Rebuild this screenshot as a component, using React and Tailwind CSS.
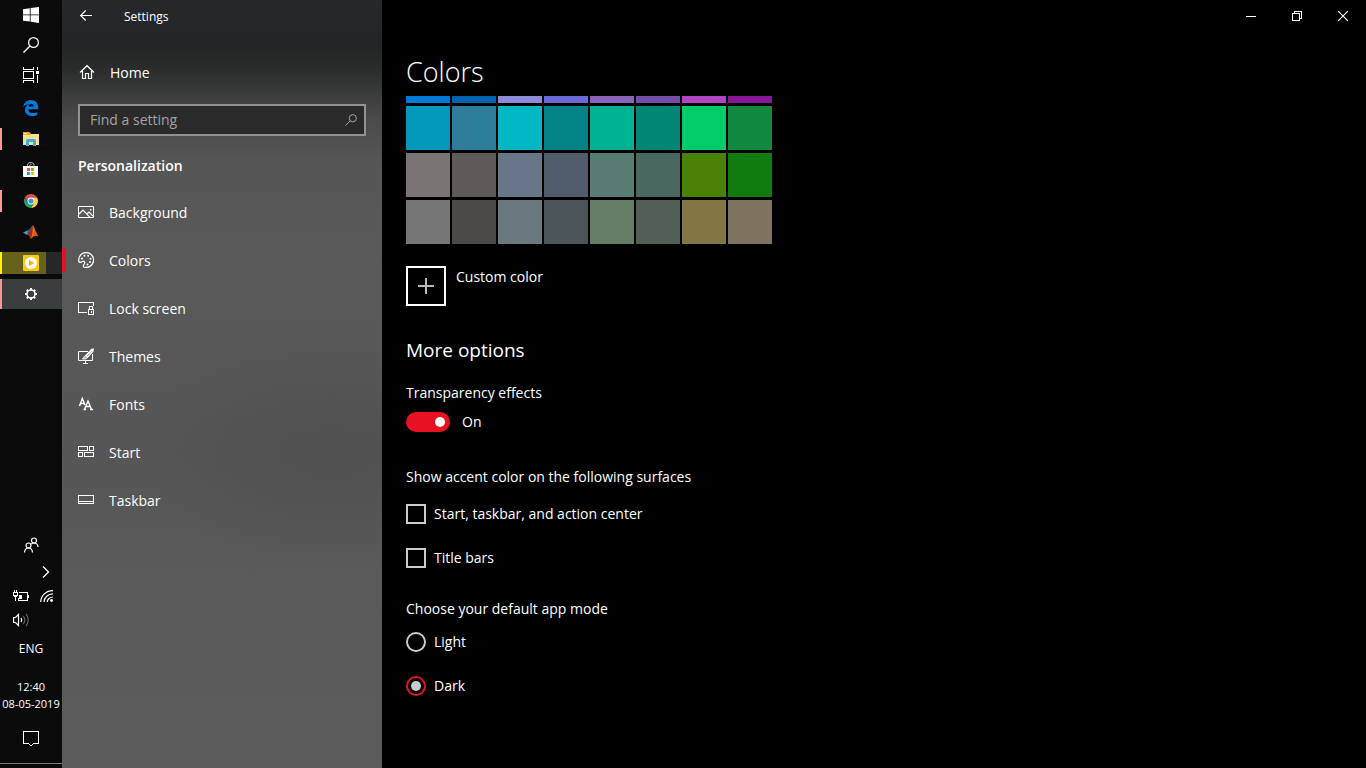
import React, { useState } from 'react';

const SWATCHES = [
  { name: 'Default blue', color: 'bg-[#0078d7]' },
  { name: 'Navy blue', color: 'bg-[#0063b1]' },
  { name: 'Purple shadow', color: 'bg-[#8e8cd8]' },
  { name: 'Purple shadow dark', color: 'bg-[#6b69d6]' },
  { name: 'Iris pastel', color: 'bg-[#8764b8]' },
  { name: 'Iris spring', color: 'bg-[#744da9]' },
  { name: 'Violet red light', color: 'bg-[#b146c2]' },
  { name: 'Violet red', color: 'bg-[#881798]' },
  { name: 'Cool blue bright', color: 'bg-[#0099bc]' },
  { name: 'Cool blue', color: 'bg-[#2d7d9a]' },
  { name: 'Seafoam', color: 'bg-[#00b7c3]' },
  { name: 'Seafoam teal', color: 'bg-[#038387]' },
  { name: 'Mint light', color: 'bg-[#00b294]' },
  { name: 'Mint dark', color: 'bg-[#018574]' },
  { name: 'Turf green', color: 'bg-[#00cc6a]' },
  { name: 'Sport green', color: 'bg-[#10893e]' },
  { name: 'Gray', color: 'bg-[#7a7574]' },
  { name: 'Gray brown', color: 'bg-[#5d5a58]' },
  { name: 'Steel blue', color: 'bg-[#68768a]' },
  { name: 'Metal blue', color: 'bg-[#515c6b]' },
  { name: 'Pale moss', color: 'bg-[#567c73]' },
  { name: 'Moss', color: 'bg-[#486860]' },
  { name: 'Meadow green', color: 'bg-[#498205]' },
  { name: 'Green', color: 'bg-[#107c10]' },
  { name: 'Overcast', color: 'bg-[#767676]' },
  { name: 'Storm', color: 'bg-[#4c4a48]' },
  { name: 'Blue gray', color: 'bg-[#69797e]' },
  { name: 'Gray dark', color: 'bg-[#4a5459]' },
  { name: 'Liddy green', color: 'bg-[#647c64]' },
  { name: 'Sage', color: 'bg-[#525e54]' },
  { name: 'Camouflage desert', color: 'bg-[#847545]' },
  { name: 'Camouflage', color: 'bg-[#7e735f]' },
];

function Icon({ children, w = 16, h = 16, crisp = false }) {
  return (
    <svg
      width={w}
      height={h}
      viewBox={`0 0 ${w} ${h}`}
      fill="none"
      stroke="currentColor"
      shapeRendering={crisp ? 'crispEdges' : 'auto'}
      className="shrink-0"
      aria-hidden="true"
    >
      {children}
    </svg>
  );
}

/* ---------- taskbar icons ---------- */

const WindowsIcon = () => (
  <Icon>
    <path stroke="none" fill="currentColor" d="M0 2.2 6.8 1.2V7.4H0zM7.6 1.1 16 0V7.4H7.6zM0 8.3H6.8V14.6L0 13.7zM7.6 8.3H16V16L7.6 14.8z" />
  </Icon>
);

const SearchIcon = () => (
  <Icon>
    <circle cx="10.5" cy="5.5" r="4.9" strokeWidth="1.2" />
    <path d="M7 9 .5 15.5" strokeWidth="1.4" />
  </Icon>
);

const TaskViewIcon = () => (
  <Icon crisp>
    <path d="M.5 0V2.5H10.5V0M.5 16V13.5H10.5V16M.5 4.5H10.5V11.5H.5zM14.5 0V3M14.5 8V16" />
    <path stroke="none" fill="currentColor" d="M13 4h3v3h-3z" />
  </Icon>
);

const EdgeIcon = () => (
  <Icon>
    <path
      stroke="none"
      fill="#0078d7"
      d="M.2 7C.9 2.6 4 0 8 0c4.600 0 7.200 3.200 7.200 7.400v1.800H5.300c.1 2.600 2.100 3.900 4.700 3.900 1.700 0 3.100-.5 4.300-1.200v3.200C12.900 15.800 11.300 16.200 9.300 16.200 4.800 16.200 2 13.600 2 9.900 2 7.300 3.500 5.300 5.800 4.300 3.400 4.400 1.500 5.400.2 7zM5.500 6.500h5.200C10.700 4.700 9.900 3.700 8.300 3.700 6.700 3.700 5.700 4.900 5.500 6.500z"
    />
  </Icon>
);

const FolderIcon = () => (
  <Icon>
    <g stroke="none">
      <path fill="#e8b022" d="M0 1h6.500L8 3h8v3H0z" />
      <path fill="#ffe9a6" d="M1 2h3v1H1z" />
      <path fill="#fde08a" d="M0 4h7l1-1h8v11H0z" />
      <path fill="#35b0ea" d="M3 15V9.500Q3 8 4.500 8h7Q13 8 13 9.500V15h-3v-4H6v4z" />
    </g>
  </Icon>
);

const StoreIcon = () => (
  <Icon>
    <path d="M4.500 5V3.500C4.500 1.500 5.500.7 7 .7h1.500C10 .7 11 1.500 11 3.500V5M6.500 4.500C6.500 3 7.500 2.500 8.500 2.500" stroke="#ccc" />
    <g stroke="none">
      <path fill="#fff" d="M0 4h15v10q0 1-1 1H1q-1 0-1-1z" />
      <path fill="#f25022" d="M4 6h3v3H4z" />
      <path fill="#7fba00" d="M8 6h3v3H8z" />
      <path fill="#00a4ef" d="M4 10h3v3H4z" />
      <path fill="#ffb900" d="M8 10h3v3H8z" />
    </g>
  </Icon>
);

const ChromeIcon = () => (
  <Icon>
    <g stroke="none">
      <path fill="#dd4f43" d="M8 4.600H14.100A7 7 0 0 0 1.940 4.500L5 9.700z" />
      <path fill="#ffcd46" d="M8 4.600H14.120A7 7 0 0 1 8 15L11 9.700z" />
      <path fill="#1ea362" d="M1.940 4.500A7 7 0 0 0 8 15L11 9.700H5z" />
      <circle cx="8" cy="8" r="3.400" fill="#fff" />
      <circle cx="8" cy="8" r="2.600" fill="#4a8af4" />
    </g>
  </Icon>
);

const MatlabIcon = () => (
  <Icon>
    <g stroke="none">
      <path fill="#4b9bd4" d="M0 8.500 5 6.200 6.500 8 4 11z" />
      <path fill="#2c5f94" d="M5 6.200C7 5.500 8 2.500 9.500 1.500L7.500 9 4 11z" />
      <path fill="#9c2a14" d="M9.800 1C8.500 3.500 8 7 4 11c1.600-.4 2.500 1.500 3.600 4C9.600 13 10.500 10 10.500 7z" />
      <path fill="#e0601c" d="M9.800 1C11.500 2 12.500 8.500 15.800 12.600 13.500 10.800 11 11.500 7.600 15 10 9.500 9.500 5 9.800 1z" />
      <path fill="#f7b24a" d="M10.200 3.500C10.700 6 10.500 9 9.500 12 11 8.500 11 6 10.200 3.500z" />
    </g>
  </Icon>
);

const PlayerIcon = () => (
  <Icon>
    <g stroke="none">
      <rect width="16" height="16" rx="1" fill="#f7cb15" />
      <circle cx="8" cy="8" r="6" fill="#fff" />
      <path fill="#f2b90c" d="M6 4.800 11.300 8 6 11.200z" />
    </g>
  </Icon>
);

const GearIcon = () => (
  <Icon>
    <circle cx="8" cy="8" r="4" strokeWidth="1.600" />
    <path d="M8 4V2M8 12v2M4 8H2M12 8h2M5.200 5.200 3.800 3.800M10.800 10.800l1.400 1.400M10.800 5.200l1.400-1.400M5.200 10.800l-1.400 1.400" strokeWidth="2" />
  </Icon>
);

const PeopleIcon = () => (
  <Icon>
    <circle cx="5.500" cy="8.500" r="2.500" strokeWidth="1.200" />
    <path d="M1.500 15.500C1.700 12.800 3.200 11 5.500 11s3.800 1.800 4 4.500" strokeWidth="1.200" />
    <circle cx="11" cy="3.500" r="2.500" strokeWidth="1.200" />
    <path d="M8.300 7.200C9 6.500 9.900 6 11 6c2.300 0 3.800 1.800 4 4" strokeWidth="1.200" />
  </Icon>
);

const ChevronIcon = () => (
  <Icon w={8} h={12}>
    <path d="M1 .5 6.500 6 1 11.500" strokeWidth="1.300" />
  </Icon>
);

const BatteryIcon = () => (
  <Icon h={12} crisp>
    <path d="M6 2.500h8.500v8h-9V8M15.500 5v3M1.500 0v2M3.500 0v2M.5 2.500h4v3h-4zM2.500 6v5" />
    <path stroke="none" fill="currentColor" d="M1 5h3v2H1zM6 5h3v4H6z" />
  </Icon>
);

const WifiIcon = () => (
  <Icon w={14} h={12}>
    <path d="M.7 12C1 5.500 6 .7 13 .7M4 12C4.200 7.500 7.800 3.900 13 3.900M7.200 12C7.300 9.300 9.800 7 13 7" strokeWidth="1.200" />
    <circle cx="11.500" cy="10.500" r="1.400" stroke="none" fill="currentColor" />
  </Icon>
);

const VolumeIcon = () => (
  <Icon h={14}>
    <path d="M.6 4.500H2.500L5.500 1.500v11L2.500 9.500H.6zM8 4.800q1.500 2.200 0 4.400" strokeWidth="1.200" />
    <path d="M10.500 2.800q3 4.200 0 8.400M13 .8q4.500 6.200 0 12.400" stroke="#777" />
  </Icon>
);

const ActionCenterIcon = () => (
  <Icon h={17} crisp>
    <path d="M.5.5h15v12h-5L8 15 5.500 12.500h-5z" />
  </Icon>
);

/* ---------- settings icons ---------- */

const BackIcon = () => (
  <Icon w={12} h={12}>
    <path d="M0 5.500h12M5.700.5.700 5.500l5 5" strokeWidth="1.200" />
  </Icon>
);

const HomeIcon = () => (
  <Icon>
    <path d="M1 8.500 8 1.700 15 8.500M3.500 7V14.500H6.500V9.500h3v5h3V7" strokeWidth="1.200" />
  </Icon>
);

const FindIcon = () => (
  <Icon w={12} h={12}>
    <circle cx="7.800" cy="4.200" r="3.600" />
    <path d="M5.200 6.800.500 11.500" />
  </Icon>
);

const PictureIcon = () => (
  <Icon>
    <path d="M.5 2.500h15v11H.5z" />
    <path d="M1 10 5 6l7 7.300M9 9.800 11 8l4 4.200" strokeWidth="1.200" />
    <path stroke="none" fill="currentColor" d="M12 5h1.500v1.500H12z" />
  </Icon>
);

const PaletteIcon = () => (
  <Icon>
    <path
      d="M8 .600a7.400 7.400 0 1 1-2.200 14.400C4.700 14.400 5.800 12.500 6.500 11.500c.7-1.300-.6-2.700-1.900-2.100C3 10.200 1.500 11 .8 9.500.200 4.500 3.500.600 8 .600z"
      strokeWidth="1.300"
    />
    <g stroke="none" fill="currentColor">
      <circle cx="4" cy="6.500" r="1" />
      <circle cx="6.500" cy="3.700" r="1" />
      <circle cx="10.200" cy="3.700" r="1" />
      <circle cx="12.500" cy="6.700" r="1" />
      <circle cx="12" cy="10" r="1" />
      <circle cx="9.500" cy="12.500" r="1" />
    </g>
  </Icon>
);

const LockScreenIcon = () => (
  <Icon crisp>
    <path d="M9 12.500H.5v-10h15V6M10.500 9.500h5v5h-5zM11.500 9V6.500h3V9" />
    <path d="M13 11v2" />
  </Icon>
);

const ThemesIcon = () => (
  <Icon>
    <path d="M10 3.500H.5v9h14V6M7.500 12.500V15M5 15.500h5" />
    <path d="M15.300 1 8.500 7.500M15.300 1 15 3.200 9.800 9 8 7.500 13.500 1.500z" strokeWidth="1.200" />
    <path d="M8 7.700c-1.500 0-2 1-2.200 2.300l-1.300.8c2 .6 4.800.2 5-1.800" fill="currentColor" fillOpacity=".5" />
  </Icon>
);

const FontsIcon = () => (
  <Icon>
    <path d="M1.500 10 4.300 2.500 7 9M2.500 7.500h4M6.500 13.500 10 5l3.500 8.500M7.800 10.500h4.500M5.500 13.500H8M12 13.500h3" strokeWidth="1.400" />
  </Icon>
);

const StartIcon = () => (
  <Icon crisp>
    <path d="M.5 2.500h9v4h-9zM11.500 2.500h4v4h-4zM.5 8.500h4v4h-4zM6.500 8.500h9v4h-9z" />
  </Icon>
);

const TaskbarIcon = () => (
  <Icon crisp>
    <path d="M.5 3.500h15v8H.5zM0 9.500h16" />
  </Icon>
);

/* ---------- layout ---------- */

const APPS = [
  { name: 'Edge', icon: EdgeIcon },
  { name: 'File Explorer', icon: FolderIcon, open: true },
  { name: 'Store', icon: StoreIcon },
  { name: 'Chrome', icon: ChromeIcon, open: true },
  { name: 'MATLAB', icon: MatlabIcon },
];

const NAV = [
  { label: 'Background', icon: PictureIcon },
  { label: 'Colors', icon: PaletteIcon },
  { label: 'Lock screen', icon: LockScreenIcon },
  { label: 'Themes', icon: ThemesIcon },
  { label: 'Fonts', icon: FontsIcon },
  { label: 'Start', icon: StartIcon },
  { label: 'Taskbar', icon: TaskbarIcon },
];

function Taskbar() {
  return (
    <aside className="flex w-[62px] shrink-0 flex-col bg-[#0a0a0a] text-xs text-white">
      <div className="mb-[3px] flex flex-col">
        <button aria-label="Start menu" className="flex h-[30px] items-center justify-center"><WindowsIcon /></button>
        <button aria-label="Search" className="flex h-[30px] items-center justify-center"><SearchIcon /></button>
        <button aria-label="Task view" className="flex h-[30px] items-center justify-center"><TaskViewIcon /></button>
      </div>

      <div className="flex flex-col gap-px">
        {APPS.map(({ name, icon: AppIcon, open }) => (
          <button key={name} aria-label={name} className="flex h-[30px] items-center">
            <span className={open ? 'h-[22px] w-0.5 bg-[#ff9499]' : 'w-0.5'} />
            <span className="flex flex-1 justify-center pr-0.5"><AppIcon /></span>
          </button>
        ))}
        <button aria-label="Media player" className="flex h-[30px] items-center">
          <span className="flex h-[22px] w-full items-center bg-[linear-gradient(90deg,#fff200_2px,#66611a_2px,#66611a_46px,#262828_46px)]">
            <span className="flex flex-1 justify-center"><PlayerIcon /></span>
          </span>
        </button>
        <button aria-label="Settings" className="flex h-[30px] items-center justify-center border-l-2 border-[#ff9499] bg-[#3b3e3e] pr-0.5">
          <GearIcon />
        </button>
      </div>

      <div className="mt-auto flex flex-col">
        <button aria-label="People" className="flex h-[30px] items-center justify-center"><PeopleIcon /></button>
        <button aria-label="Show hidden icons" className="flex h-6 items-center justify-end pr-3"><ChevronIcon /></button>
        <div className="grid grid-cols-2 px-2">
          <button aria-label="Battery" className="flex h-6 items-center pl-[5px]"><BatteryIcon /></button>
          <button aria-label="Network" className="flex h-6 items-center justify-end"><WifiIcon /></button>
          <button aria-label="Volume" className="flex h-6 items-center pl-[5px]"><VolumeIcon /></button>
        </div>
        <button className="h-[34px] text-center">ENG</button>
        <button className="mt-3 text-center text-[11px] leading-[17px] whitespace-nowrap">
          12:40
          <br />
          08-05-2019
        </button>
        <button aria-label="Action center" className="flex h-[51px] items-center justify-center pt-1"><ActionCenterIcon /></button>
        <div className="h-[5px] border-t border-[#77797a]" />
      </div>
    </aside>
  );
}

function Sidebar({ active, onSelect }) {
  return (
    <nav className="flex w-80 shrink-0 flex-col bg-[radial-gradient(ellipse_190px_110px_at_84%_455px,#4b4b4b99,#4b4b4b00),linear-gradient(180deg,#272829_0px,#232425_45px,#2b2c2c_70px,#3c3d3d_96px,#4b4b4b_120px,#565656_165px,#595959_260px,#565656_450px,#5b5b5b_640px,#5c5c5c_768px)]">
      <div className="flex h-8 items-center gap-8 pl-[18px]">
        <button aria-label="Back"><BackIcon /></button>
        <span className="pt-0.5 text-xs">Settings</span>
      </div>

      <a href="#home" className="mt-6 flex h-8 items-center gap-[15px] pl-[17px]">
        <HomeIcon />
        <span className="pt-0.5">Home</span>
      </a>

      <label className="mx-4 mt-4 flex h-8 items-center border-2 border-[#929292] bg-[#2a2a2a] px-2.5 text-[#a3a3a3]">
        <input
          type="text"
          aria-label="Find a setting"
          placeholder="Find a setting"
          className="min-w-0 flex-1 bg-transparent outline-none placeholder:text-[#a3a3a3]"
        />
        <span className="-mr-[3px]"><FindIcon /></span>
      </label>

      <h2 className="mt-5 mb-3 pl-4 leading-5 font-semibold">Personalization</h2>

      <ul>
        {NAV.map(({ label, icon: NavIcon }) => (
          <li key={label}>
            <a
              href={`#${label.toLowerCase().replace(' ', '-')}`}
              onClick={() => onSelect(label)}
              className="flex h-12 items-center"
            >
              <span className={active === label ? 'h-6 w-1 bg-[#e81123]' : 'w-1'} />
              <span className="ml-3 flex items-center gap-[15px]">
                <NavIcon />
                <span className="pt-0.5">{label}</span>
              </span>
            </a>
          </li>
        ))}
      </ul>
    </nav>
  );
}

function WindowControls() {
  return (
    <div className="flex justify-end">
      <button aria-label="Minimize" className="flex h-8 w-[46px] items-center justify-center">
        <Icon w={10} h={10} crisp><path d="M0 5.500h10" /></Icon>
      </button>
      <button aria-label="Restore" className="flex h-8 w-[46px] items-center justify-center">
        <Icon w={10} h={10} crisp><path d="M.5 2.500h7v7h-7zM2.500 2V.5h7v7H8" /></Icon>
      </button>
      <button aria-label="Close" className="flex h-8 w-[46px] items-center justify-center">
        <Icon w={10} h={10}><path d="M0 0l10 10M10 0 0 10" strokeWidth="1.200" /></Icon>
      </button>
    </div>
  );
}

function App() {
  const [page, setPage] = useState('Colors');
  const [transparency, setTransparency] = useState(true);
  const [mode, setMode] = useState('Dark');

  return (
    <div className="flex min-h-screen bg-black font-['Open_Sans','Noto_Sans',sans-serif] text-sm text-white">
      <Taskbar />
      <Sidebar active={page} onSelect={setPage} />

      <main className="flex min-w-0 flex-1 flex-col">
        <WindowControls />

        <div className="px-6">
          <h1 className="mt-5 text-[27px] leading-10 font-light">Colors</h1>

          {/* palette is scrolled, so the first row is cut off under the heading */}
          <div className="mt-1 flex h-[148px] flex-col justify-end overflow-hidden">
            <div className="grid w-fit grid-cols-8 gap-x-0.5 gap-y-[3px]">
              {SWATCHES.map(({ name, color }) => (
                <button key={name} aria-label={name} className={`size-11 ${color}`} />
              ))}
            </div>
          </div>

          <div className="mt-[22px] flex gap-2.5">
            <button id="custom-color" aria-label="Custom color" className="flex size-10 items-center justify-center border-2 border-white text-[#b8b8b8]">
              <Icon crisp><path d="M8 0v16M0 8h16" strokeWidth="2" /></Icon>
            </button>
            <label htmlFor="custom-color" className="leading-[22px]">Custom color</label>
          </div>

          <h2 className="mt-[30px] text-[19px] leading-7">More options</h2>

          <label htmlFor="transparency" className="mt-[18px] block leading-[22px]">Transparency effects</label>
          <div className="mt-2 flex items-center gap-3">
            <input
              id="transparency"
              type="checkbox"
              role="switch"
              checked={transparency}
              onChange={(e) => setTransparency(e.target.checked)}
              className="flex h-5 w-11 appearance-none items-center rounded-full bg-[#333] px-[5px] before:size-2.5 before:rounded-full before:bg-white checked:justify-end checked:bg-[#e81123]"
            />
            <span className="leading-5">{transparency ? 'On' : 'Off'}</span>
          </div>

          <fieldset className="mt-[34px]">
            <legend className="leading-[22px]">Show accent color on the following surfaces</legend>
            <div className="mt-4 flex flex-col items-start gap-6">
              {['Start, taskbar, and action center', 'Title bars'].map((label) => (
                <label key={label} className="flex items-center gap-2 leading-5">
                  <input type="checkbox" className="size-5 appearance-none border-2 border-[#ccc] checked:bg-[#e81123]" />
                  {label}
                </label>
              ))}
            </div>
          </fieldset>

          <fieldset className="mt-[30px]">
            <legend className="leading-[22px]">Choose your default app mode</legend>
            <div className="mt-3 flex flex-col items-start gap-6">
              {['Light', 'Dark'].map((label) => (
                <label key={label} className="flex items-center gap-2 leading-5">
                  <input
                    type="radio"
                    name="app-mode"
                    checked={mode === label}
                    onChange={() => setMode(label)}
                    className="flex size-5 appearance-none items-center justify-center rounded-full border-2 border-[#ccc] before:size-2.5 before:rounded-full checked:border-[#e81123] checked:before:bg-[#ccc]"
                  />
                  {label}
                </label>
              ))}
            </div>
          </fieldset>
        </div>
      </main>
    </div>
  );
}

export default App;
